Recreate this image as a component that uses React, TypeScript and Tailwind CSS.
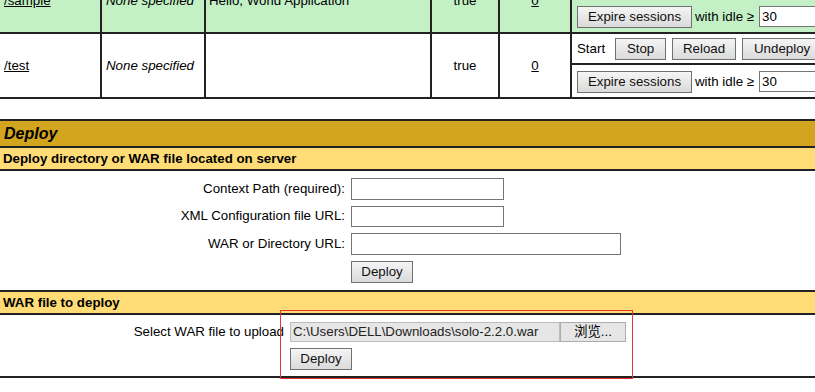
import React from "react"

function Btn({ w, children }: { w: string; children: React.ReactNode }) {
  return (
    <button className={`${w} h-[22px] shrink-0 border border-[#707070] bg-linear-to-b from-[#f5f5f5] to-[#dadada] text-[13.3px] leading-none text-[#111]`}>
      {children}
    </button>
  )
}

function Field({ w, value }: { w: string; value?: string }) {
  return (
    <input
      readOnly
      value={value ?? ""}
      className={`${w} h-[21.5px] shrink-0 border border-[#767676] bg-white px-[2px] text-[13.3px] text-black outline-none`}
    />
  )
}

function ExpireRow() {
  return (
    <div className="flex flex-1 items-center pl-[5px] pt-[1px]">
      <Btn w="w-[115px]">Expire sessions</Btn>
      <span className="ml-[3px] mr-[5px]">with idle ≥</span>
      <Field w="w-[80px]" value="30" />
    </div>
  )
}

function AppRow({ path, name, bg }: { path: string; name: string; bg: string }) {
  return (
    <div className={`flex h-[65px] border-b-2 border-[#222] ${bg}`}>
      <div className="flex w-[102px] shrink-0 items-center border-r-2 border-[#222] pl-[4px]">
        <a className="underline">{path}</a>
      </div>
      <div className="flex w-[104px] shrink-0 items-center border-r-2 border-[#222] pl-[4px] italic">None specified</div>
      <div className="flex w-[226px] shrink-0 items-center border-r-2 border-[#222] pl-[3px]">{name}</div>
      <div className="flex w-[68px] shrink-0 items-center justify-center border-r-2 border-[#222]">true</div>
      <div className="flex w-[72px] shrink-0 items-center justify-center border-r-2 border-[#222]">
        <a className="underline">0</a>
      </div>
      <div className="flex w-[330px] shrink-0 flex-col">
        <div className="flex h-[31px] items-center border-b-2 border-[#222] pl-[5px]">
          <span className="mr-[10px]">Start</span>
          <div className="flex gap-[6px]">
            <Btn w="w-[51px]">Stop</Btn>
            <Btn w="w-[64px]">Reload</Btn>
            <Btn w="w-[80px]">Undeploy</Btn>
          </div>
        </div>
        <ExpireRow />
      </div>
    </div>
  )
}

export default function App() {
  return (
    <div className="relative h-[392px] w-[815px] overflow-hidden bg-white font-['Liberation_Sans',Arial,sans-serif] text-[13.3px] text-black">
      {/* Applications table, scrolled so the first row is cut */}
      <div className="-mt-[31px] w-[902px]">
        <AppRow path="/sample" name="Hello, World Application" bg="bg-[#c3f1c5]" />
        <AppRow path="/test" name="" bg="bg-white" />
      </div>

      {/* Deploy */}
      <div className="mt-[20px]">
        <div className="flex h-[27px] items-center border-t-2 border-[#222] bg-[#d3a51e] pl-[4px] text-[16px] font-bold italic">
          Deploy
        </div>
        <div className="flex h-[23px] items-center border-t-2 border-[#222] bg-[#ffdc75] pl-[3px] font-bold">
          Deploy directory or WAR file located on server
        </div>
        <div className="h-[121px] border-t-2 border-[#222] pt-[7px]">
          <div className="grid grid-cols-[345px_1fr] items-center gap-x-[6px] gap-y-[6px]">
            <span className="text-right">Context Path (required):</span>
            <Field w="w-[153px]" />
            <span className="text-right">XML Configuration file URL:</span>
            <Field w="w-[153px]" />
            <span className="text-right">WAR or Directory URL:</span>
            <Field w="w-[270px]" />
            <span />
            <Btn w="w-[62px]">Deploy</Btn>
          </div>
        </div>
        <div className="flex h-[23px] items-center border-t-2 border-[#222] bg-[#ffdc75] pl-[3px] font-bold">
          WAR file to deploy
        </div>
        <div className="h-[65px] border-y-2 border-[#222] pt-[7px]">
          <div className="grid grid-cols-[284px_1fr] items-center gap-x-[6px] gap-y-[6px]">
            <span className="text-right">Select WAR file to upload</span>
            <div className="flex h-[20px] w-[336px]">
              <div className="flex flex-1 items-center border border-[#bcbcbc] bg-[#e6e6e6] pl-[2px] text-[#222]">
                C:\Users\DELL\Downloads\solo-2.2.0.war
              </div>
              <div className="flex w-[66px] items-center justify-center border border-[#adadad] bg-[#e6e6e6] font-['Liberation_Sans','Noto_Sans_CJK_SC',sans-serif]">
                浏览...
              </div>
            </div>
            <span />
            <Btn w="w-[62px]">Deploy</Btn>
          </div>
        </div>
      </div>

      {/* annotation box */}
      <div className="absolute left-[280px] top-[310px] h-[69px] w-[353px] border border-[#e8352e]" />
    </div>
  )
}
